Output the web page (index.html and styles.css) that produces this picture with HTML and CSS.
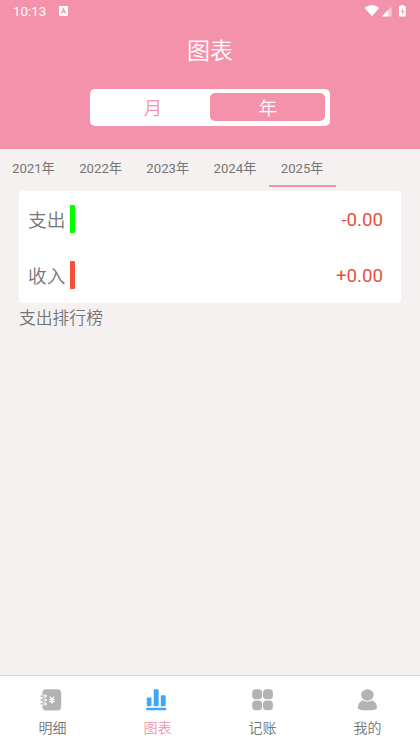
FILE: index.html
```html
<!DOCTYPE html>
<html lang="zh-CN">
<head>
<meta charset="utf-8">
<title>图表</title>
<link rel="stylesheet" href="styles.css">
</head>
<body>
<div class="app">
  <header class="header">
    <div class="status">
      <span class="clock">10:13</span>
      <svg class="app-badge" width="9" height="10" viewBox="0 0 9 10"><rect width="9" height="10" rx="1" fill="#fff"/><path d="M2.4 7.6 4.5 2.8 6.6 7.6M3.2 6h2.6" fill="none" stroke="#f492ab" stroke-width="1.2"/></svg>
      <svg class="signals" width="43" height="14" viewBox="0 0 43 14"><path d="M.5 3.8Q8 -1.8 15.3 3.8L7.9 12.2Z" fill="#fff"/><path d="M17.5 12.5 24.5 5.7V12.5Z" fill="#fff"/><path d="M24.5 5.7 27.5 2.8V12.5H24.5Z" fill="#fbcfd9"/><path d="M36.8 1h3V2h1.2q.7 0 .7.7v9.1q0 .7-.7.7h-5.3q-.7 0-.7-.7V2.7q0-.7.7-.7h1.1Z" fill="#fff"/><path d="M39 4 37 8h1.2v3l2-4H39Z" fill="#f492ab"/></svg>
    </div>
    <h1 class="title">图表</h1>
    <div class="segment">
      <div class="segment-item">月</div>
      <div class="segment-item selected">年</div>
    </div>
  </header>
  <nav class="years">
    <div class="year">2021年</div>
    <div class="year">2022年</div>
    <div class="year">2023年</div>
    <div class="year">2024年</div>
    <div class="year current">2025年</div>
  </nav>
  <main class="content">
    <section class="card">
      <div class="row"><span class="label">支出</span><i class="bar expense"></i><span class="amount">-0.00</span></div>
      <div class="row"><span class="label">收入</span><i class="bar income"></i><span class="amount">+0.00</span></div>
    </section>
    <h2 class="ranking">支出排行榜</h2>
  </main>
  <footer class="tabbar">
    <div class="tab">
      <svg width="26" height="22" viewBox="0 0 26 22"><rect x="2.3" y=".3" width="18.9" height="21.2" rx="4" fill="#b3b3b3"/><path d="M2.3 7.1h3.2M2.3 11h3.2M2.3 14.9h3.2" stroke="#fff" stroke-width="2.6" stroke-linecap="round"/><path d="M.5 7.1h4.6M.5 11h4.6M.5 14.9h4.6" stroke="#b3b3b3" stroke-width="1.3"/><path d="M5.5 6.3v1.6M5.5 10.2v1.6M5.5 14.1v1.6" stroke="#fff" stroke-width="1.3"/><path d="M9.7 7.7 11.9 10.4 14.1 7.7M11.9 10.4v4.3M9.4 10.6h5M9.4 12.6h5" stroke="#fff" stroke-width="1.1" fill="none"/></svg>
      <span>明细</span>
    </div>
    <div class="tab active">
      <svg width="26" height="22" viewBox="0 0 26 22"><g fill="#42a5f5"><rect x="1.8" y="8.6" width="4.7" height="8.6" rx="1"/><rect x="8.7" y=".3" width="5" height="16.9" rx="1"/><rect x="15.8" y="6.2" width="4.8" height="11" rx="1"/><rect x="1.2" y="18.8" width="20" height="2.4" rx=".6"/></g></svg>
      <span>图表</span>
    </div>
    <div class="tab">
      <svg width="22" height="22" viewBox="0 0 22 22"><g fill="#b3b3b3"><rect x=".2" y=".3" width="9.9" height="9.9" rx="3.5"/><rect x="11" y=".3" width="9.9" height="9.9" rx="3.5"/><rect x=".2" y="11.4" width="9.9" height="9.9" rx="3.5"/><rect x="11" y="11.4" width="9.9" height="9.9" rx="3.5"/></g></svg>
      <span>记账</span>
    </div>
    <div class="tab">
      <svg width="22" height="22" viewBox="0 0 22 22"><g fill="#b3b3b3"><ellipse cx="10.4" cy="6" rx="6.3" ry="5.7"/><path d="M5.6 11.3Q10.4 14 15.2 11.3Q20 13.8 20 18.7Q20 21.3 10.4 21.3Q.8 21.3 .8 18.7Q.8 13.8 5.6 11.3Z"/></g></svg>
      <span>我的</span>
    </div>
  </footer>
</div>
</body>
</html>
```
FILE: styles.css
```css
* {
  box-sizing: border-box;
}

body {
  margin: 0;
  font-family: Roboto, "Noto Sans CJK SC", sans-serif;
  color: #757575;
  background: #f5f1f1;
}

.app {
  display: flex;
  flex-direction: column;
  width: 420px;
  height: 746px;
  overflow: hidden;
}

.header {
  height: 149px;
  background: #f492ab;
  color: #fff;
}

.status {
  display: flex;
  align-items: center;
  height: 22px;
  padding: 0 13px 0 13px;
}

.clock {
  width: 45.5px;
  padding-top: 1px;
  font-size: 13.3px;
}

.signals {
  margin-left: auto;
}

.title {
  margin: 12px 0 0;
  font-size: 23px;
  font-weight: 350;
  line-height: 35px;
  text-align: center;
}

.segment {
  display: flex;
  width: 239.5px;
  height: 37.5px;
  margin: 19.5px 0 0 90.4px;
  padding: 4.5px 4.5px 5px 5px;
  border-radius: 5px;
  background: #fff;
}

.segment-item {
  flex: 1;
  height: 28px;
  border-radius: 5px;
  color: #f492ab;
  font-size: 18.7px;
  font-weight: 350;
  line-height: 32px;
  text-align: center;
}

.segment-item.selected {
  background: #f492ab;
  color: #fff;
}

.years {
  display: flex;
  height: 38px;
}

.year {
  width: 67.2px;
  padding-right: .4px;
  border-bottom: 2px solid transparent;
  font-size: 13.2px;
  font-weight: 400;
  line-height: 39px;
  text-align: center;
}

.year.current {
  border-color: #f492ab;
}

.content {
  flex: 1;
  padding: 4px 19px 0;
}

.card {
  border-radius: 4px;
  background: #fff;
}

.row {
  display: flex;
  align-items: center;
  height: 56px;
  padding: 0 18px 0 9px;
  font-size: 18.7px;
}

.label {
  width: 42px;
  padding-bottom: 2px;
  font-weight: 350;
}

.bar {
  width: 5px;
  height: 28px;
  border-radius: 1px;
}

.expense {
  background: #0f0;
}

.income {
  background: #f4513b;
}

.amount {
  margin-left: auto;
  padding-top: 2px;
  color: #e8503e;
}

.ranking {
  margin: 3px 0 0;
  font-size: 16.8px;
  font-weight: 350;
  line-height: 25px;
}

.tabbar {
  display: flex;
  height: 71px;
  border-top: 1px solid #dfd5d9;
  background: #fff;
}

.tab {
  display: flex;
  flex: 1;
  flex-direction: column;
  align-items: center;
  padding-top: 13px;
  font-size: 14px;
  font-weight: 350;
  line-height: 20px;
}

.tab svg {
  margin-bottom: 7px;
}

.active {
  color: #f492ab;
}
```
